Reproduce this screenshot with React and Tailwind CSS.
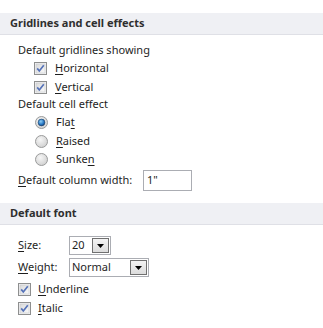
import React from "react";

const font = { fontFamily: '"Noto Sans", "Open Sans", sans-serif' };

const Check = () => (
  <svg width="13" height="13" viewBox="0 0 13 13" className="shrink-0">
    <defs>
      <linearGradient id="cbg" x1="0" y1="0" x2="1" y2="1">
        <stop offset="0" stopColor="#d9d9d9" />
        <stop offset="1" stopColor="#fafafa" />
      </linearGradient>
    </defs>
    <rect x="0.5" y="0.5" width="12" height="12" fill="#f4f4f4" stroke="#8e8f8f" />
    <rect x="2" y="2" width="9" height="9" fill="url(#cbg)" stroke="#c6c8cc" strokeWidth="0.6" />
    <path d="M3.2 6.4 L5.3 9 L9.8 3.2" fill="none" stroke="#5572b8" strokeWidth="1.7" />
  </svg>
);

const Radio = ({ on }) => (
  <svg width="13" height="13" viewBox="0 0 13 13" className="shrink-0">
    <defs>
      <radialGradient id="rbg" cx="0.4" cy="0.35" r="0.7">
        <stop offset="0" stopColor="#f6f6f6" />
        <stop offset="1" stopColor="#cfcfcf" />
      </radialGradient>
      <radialGradient id="rdot" cx="0.4" cy="0.35" r="0.7">
        <stop offset="0" stopColor="#8fd0f5" />
        <stop offset="0.6" stopColor="#2a7ac6" />
        <stop offset="1" stopColor="#0f3f7a" />
      </radialGradient>
    </defs>
    <circle cx="6.5" cy="6.5" r="6" fill="url(#rbg)" stroke="#9a9b9b" />
    {on && <circle cx="6.5" cy="6.5" r="3.4" fill="url(#rdot)" stroke="#1c3f66" strokeWidth="0.6" />}
  </svg>
);

const U = ({ children }) => <span className="underline underline-offset-2">{children}</span>;

const DropBtn = () => (
  <div className="flex h-full w-[17px] items-center justify-center border border-[#707070] bg-gradient-to-b from-[#f3f3f3] to-[#dcdcdc]">
    <svg width="7" height="4" viewBox="0 0 7 4">
      <path d="M0 0 H7 L3.5 4 Z" fill="#000" />
    </svg>
  </div>
);

const Header = ({ children }) => (
  <div className="flex h-[22px] items-center border-b border-[#dfe0e6] bg-[#eff0f4] pl-[10px] font-bold text-[#2f2f2f]">
    {children}
  </div>
);

export default function App() {
  return (
    <div className="h-[328px] w-[323px] bg-white text-[11px] text-[#1e1e1e]" style={font}>
      <div className="pt-[13px]">
        <Header>Gridlines and cell effects</Header>
      </div>
      <div className="flex flex-col pl-[18px] pt-[6px]">
        <div className="flex h-[18px] items-center">Default gridlines showing</div>
        <div className="flex flex-col pl-[16px]">
          <div className="flex h-[19px] items-center gap-[8px]">
            <Check />
            <span><U>H</U>orizontal</span>
          </div>
          <div className="flex h-[18px] items-center gap-[8px]">
            <Check />
            <span><U>V</U>ertical</span>
          </div>
        </div>
        <div className="flex h-[17px] items-center">Default cell effect</div>
        <div className="flex flex-col pl-[17px]">
          <div className="flex h-[19px] items-center gap-[8px]">
            <Radio on />
            <span>Fla<U>t</U></span>
          </div>
          <div className="flex h-[18px] items-center gap-[8px]">
            <Radio />
            <span><U>R</U>aised</span>
          </div>
          <div className="flex h-[18px] items-center gap-[8px]">
            <Radio />
            <span>Sunke<U>n</U></span>
          </div>
        </div>
        <div className="mt-[2px] flex h-[21px] items-center">
          <span className="w-[125px] shrink-0"><U>D</U>efault column width:</span>
          <div className="flex h-[21px] w-[49px] items-center border border-[#abadb3] pl-[3px]">1"</div>
        </div>
      </div>
      <div className="pt-[12px]">
        <Header>Default font</Header>
      </div>
      <div className="flex flex-col pl-[18px] pt-[11px]">
        <div className="flex h-[19px] items-center">
          <span className="w-[51px] shrink-0"><U>S</U>ize:</span>
          <div className="flex h-[19px] w-[42px] items-center border border-[#abadb3] py-[1px] pl-[2px] pr-[1px]">
            <span className="flex-1">20</span>
            <DropBtn />
          </div>
        </div>
        <div className="mt-[3px] flex h-[19px] items-center">
          <span className="w-[51px] shrink-0"><U>W</U>eight:</span>
          <div className="flex h-[19px] w-[80px] items-center border border-[#abadb3] py-[1px] pl-[2px] pr-[1px]">
            <span className="flex-1">Normal</span>
            <DropBtn />
          </div>
        </div>
        <div className="mt-[3px] flex h-[19px] items-center gap-[7px]">
          <Check />
          <span><U>U</U>nderline</span>
        </div>
        <div className="flex h-[19px] items-center gap-[7px]">
          <Check />
          <span><U>I</U>talic</span>
        </div>
      </div>
    </div>
  );
}
